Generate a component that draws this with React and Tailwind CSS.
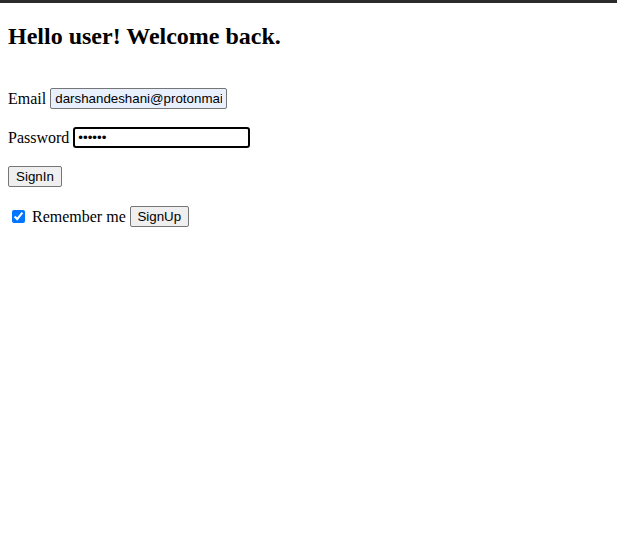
import React from 'react';

const App = () => {
  return (
    <div className="min-h-screen bg-white text-black font-['Liberation_Serif',serif] text-[16px]">
      {/* top bar */}
      <div className="h-[3px] bg-[#2b2b2b]" />

      <div className="px-[8px]">
        <h2 className="mt-[19px] text-[24px] leading-[28px] font-bold">Hello user! Welcome back.</h2>

        <form className="mt-[37px] flex flex-col gap-[16px]" onSubmit={(e) => e.preventDefault()}>
          {/* Email */}
          <div className="h-[23px] flex items-center gap-[4px]">
            <label htmlFor="email">Email</label>
            <input
              id="email"
              type="text"
              defaultValue="darshandeshani@protonmail.com"
              readOnly
              className="w-[177px] h-[21px] px-[4px] border border-[#767676] rounded-[2px] bg-[#e8f0fe] text-[13.33px] font-['Liberation_Sans',Arial,sans-serif] text-black outline-none"
            />
          </div>

          {/* Password */}
          <div className="h-[23px] flex items-center gap-[4px]">
            <label htmlFor="password">Password</label>
            <input
              id="password"
              type="password"
              defaultValue="123456"
              readOnly
              className="w-[177px] h-[21px] px-[3px] border-2 border-black rounded-[3px] bg-white text-[13.33px] font-['Liberation_Sans',Arial,sans-serif] outline-none"
            />
          </div>

          {/* Sign in */}
          <div className="h-[23px] flex items-center">
            <button
              type="submit"
              className="w-[54px] h-[21px] border border-[#767676] rounded-[2px] bg-[#efefef] text-[13.33px] font-['Liberation_Sans',Arial,sans-serif] text-black"
            >
              SignIn
            </button>
          </div>

          {/* Remember / sign up */}
          <div className="mt-[1px] h-[23px] flex items-center">
            <input type="checkbox" defaultChecked className="w-[13px] h-[13px] m-0 ml-[4px] mr-[7px] accent-[#0075ff]" />
            <span>Remember me</span>
            <button
              type="button"
              className="ml-[4px] w-[59px] h-[21px] border border-[#767676] rounded-[2px] bg-[#efefef] text-[13.33px] font-['Liberation_Sans',Arial,sans-serif] text-black"
            >
              SignUp
            </button>
          </div>
        </form>
      </div>
    </div>
  );
};

export default App;
